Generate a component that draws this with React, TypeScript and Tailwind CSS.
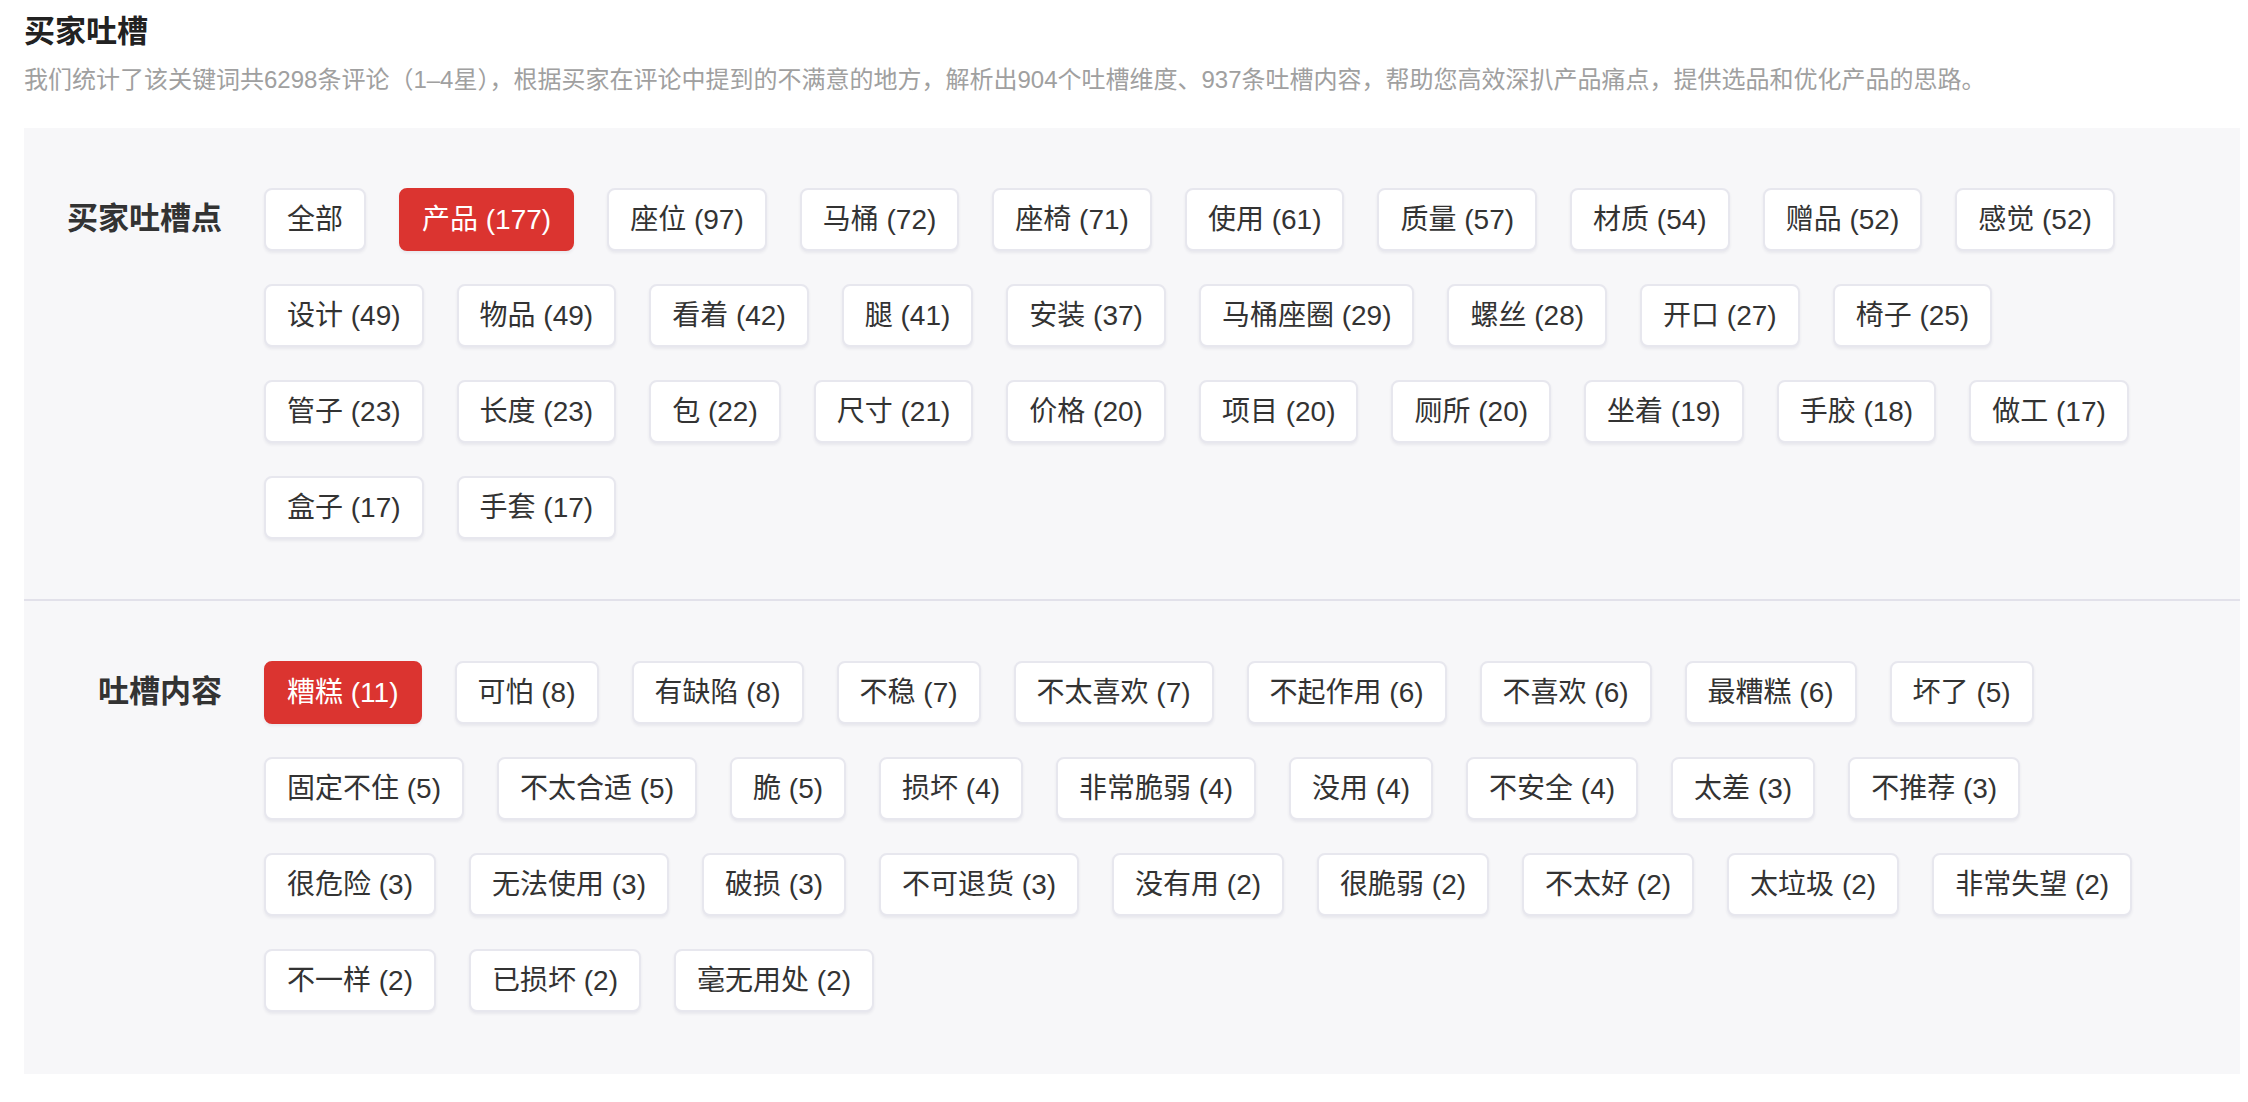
import React from 'react';

type Tag = { name: string; count?: number };

const complaintPoints: Tag[] = [
  { name: '全部' },
  { name: '产品', count: 177 },
  { name: '座位', count: 97 },
  { name: '马桶', count: 72 },
  { name: '座椅', count: 71 },
  { name: '使用', count: 61 },
  { name: '质量', count: 57 },
  { name: '材质', count: 54 },
  { name: '赠品', count: 52 },
  { name: '感觉', count: 52 },
  { name: '设计', count: 49 },
  { name: '物品', count: 49 },
  { name: '看着', count: 42 },
  { name: '腿', count: 41 },
  { name: '安装', count: 37 },
  { name: '马桶座圈', count: 29 },
  { name: '螺丝', count: 28 },
  { name: '开口', count: 27 },
  { name: '椅子', count: 25 },
  { name: '管子', count: 23 },
  { name: '长度', count: 23 },
  { name: '包', count: 22 },
  { name: '尺寸', count: 21 },
  { name: '价格', count: 20 },
  { name: '项目', count: 20 },
  { name: '厕所', count: 20 },
  { name: '坐着', count: 19 },
  { name: '手胶', count: 18 },
  { name: '做工', count: 17 },
  { name: '盒子', count: 17 },
  { name: '手套', count: 17 },
];

const complaintContents: Tag[] = [
  { name: '糟糕', count: 11 },
  { name: '可怕', count: 8 },
  { name: '有缺陷', count: 8 },
  { name: '不稳', count: 7 },
  { name: '不太喜欢', count: 7 },
  { name: '不起作用', count: 6 },
  { name: '不喜欢', count: 6 },
  { name: '最糟糕', count: 6 },
  { name: '坏了', count: 5 },
  { name: '固定不住', count: 5 },
  { name: '不太合适', count: 5 },
  { name: '脆', count: 5 },
  { name: '损坏', count: 4 },
  { name: '非常脆弱', count: 4 },
  { name: '没用', count: 4 },
  { name: '不安全', count: 4 },
  { name: '太差', count: 3 },
  { name: '不推荐', count: 3 },
  { name: '很危险', count: 3 },
  { name: '无法使用', count: 3 },
  { name: '破损', count: 3 },
  { name: '不可退货', count: 3 },
  { name: '没有用', count: 2 },
  { name: '很脆弱', count: 2 },
  { name: '不太好', count: 2 },
  { name: '太垃圾', count: 2 },
  { name: '非常失望', count: 2 },
  { name: '不一样', count: 2 },
  { name: '已损坏', count: 2 },
  { name: '毫无用处', count: 2 },
];

const TagRow: React.FC<{ label: string; tags: Tag[]; active: string; last?: boolean }> = ({ label, tags, active, last }) => {
  return (
    <div
      className={`flex pr-[80px] ${
        last ? 'pt-[60px] pb-[62px]' : 'pt-[60px] pb-[60px] border-b-2 border-[#e2e1ea]'
      }`}
    >
      <div className="w-[198px] h-[63px] shrink-0 flex items-center justify-end text-[31px] font-bold text-[#333]">
        {label}
      </div>
      <div className="ml-[42px] flex-1 flex flex-wrap gap-x-[33px] gap-y-[33px]">
        {tags.map(tag => {
          const isActive = tag.name === active;
          return (
            <button
              key={tag.name}
              className={`h-[63px] px-[21px] flex items-center rounded-[8px] border-2 text-[28px] whitespace-nowrap shadow-[0_2px_3px_rgba(40,40,90,0.07)] ${
                isActive
                  ? 'bg-[#db3430] border-[#db3430] text-white'
                  : 'bg-white border-[#e7e7ee] text-[#333]'
              }`}
            >
              {tag.count !== undefined ? `${tag.name} (${tag.count})` : tag.name}
            </button>
          );
        })}
      </div>
    </div>
  );
};

const App: React.FC = () => {
  return (
    <div
      className="min-h-screen bg-white pl-[24px] pr-[8px] pt-[10px]"
      style={{ fontFamily: '"Liberation Sans", "Noto Sans CJK SC", sans-serif' }}
    >
      <h1 className="h-[44px] flex items-center text-[31px] font-bold text-[#222]">买家吐槽</h1>
      <p className="mt-[8px] h-[36px] flex items-center text-[24px] text-[#a0a0a0]">
        我们统计了该关键词共6298条评论（1–4星），根据买家在评论中提到的不满意的地方，解析出904个吐槽维度、937条吐槽内容，帮助您高效深扒产品痛点，提供选品和优化产品的思路。
      </p>

      <div className="mt-[30px] bg-[#f7f7f9]">
        <TagRow label="买家吐槽点" tags={complaintPoints} active="产品" />
        <TagRow label="吐槽内容" tags={complaintContents} active="糟糕" last />
      </div>
    </div>
  );
};

export default App;
